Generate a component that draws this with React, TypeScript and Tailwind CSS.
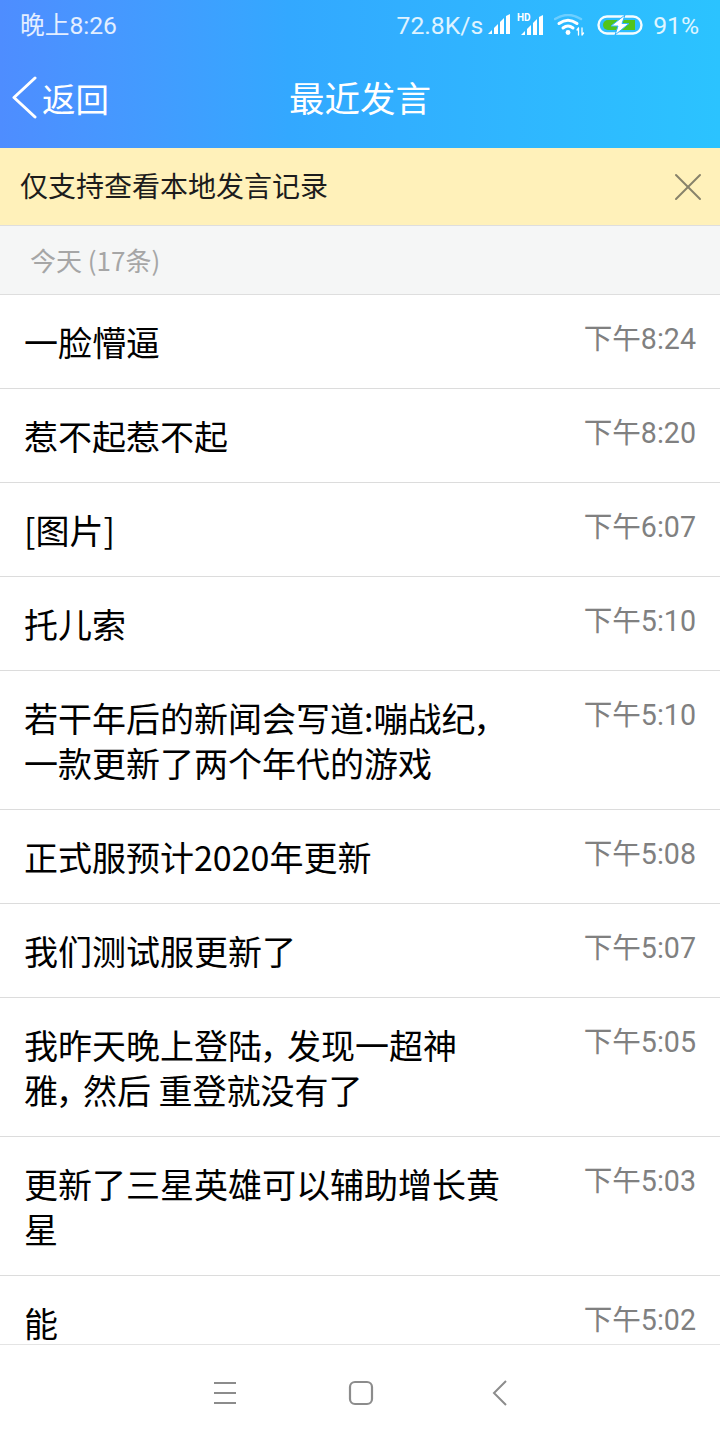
import React from 'react';
import { X } from 'lucide-react';

const Comma = () => <span className="mr-[8px]">，</span>;

const messages = [
  { lines: ['一脸懵逼'], time: '下午8:24' },
  { lines: ['惹不起惹不起'], time: '下午8:20' },
  { lines: ['[图片]'], time: '下午6:07' },
  { lines: ['托儿索'], time: '下午5:10' },
  { lines: ['若干年后的新闻会写道:嘣战纪，', '一款更新了两个年代的游戏'], time: '下午5:10' },
  { lines: ['正式服预计2020年更新'], time: '下午5:08' },
  { lines: ['我们测试服更新了'], time: '下午5:07' },
  { lines: [<>我昨天晚上登陆<Comma />发现一超神</>, <>雅<Comma />然后 重登就没有了</>], time: '下午5:05' },
  { lines: ['更新了三星英雄可以辅助增长黄', '星'], time: '下午5:03' },
  { lines: ['能'], time: '下午5:02' },
];

const SignalBars = () => (
  <g fill="white">
    <polygon points="0,20 4,16 4,20" />
    <polygon points="6,20 6,14 10,10 10,20" />
    <polygon points="12,20 12,8 16,4 16,20" />
    <polygon points="18,20 18,2 22,0 22,20" />
  </g>
);

const WifiIcon = () => (
  <svg width="31" height="22" viewBox="0 0 31 22" fill="none" stroke="white" strokeLinecap="round">
    <path d="M1 5 Q14 -3 27 5" strokeWidth="2.5" opacity="0.3" />
    <path d="M5 9.5 Q14 3 23 9.5" strokeWidth="3" />
    <path d="M9 14 Q14 10 19 14" strokeWidth="3" />
    <circle cx="14" cy="18.5" r="2.4" fill="white" stroke="none" />
    <path d="M24.5 21v-7M23 16l1.5-2M28 14v7M29.5 19l-1.5 2" strokeWidth="1.3" />
  </svg>
);

const BatteryIcon = () => (
  <svg width="46" height="20" viewBox="0 0 46 20">
    <rect x="1.5" y="1.5" width="43" height="17" rx="8.5" fill="none" stroke="white" strokeWidth="2.4" opacity="0.95" />
    <path d="M6 10a5 5 0 0 1 5-5H38V15H11A5 5 0 0 1 6 10z" fill="#52c41a" />
    <path d="M28 0 L14 11 H21 L18 20 L32 8.500 H25 Z" fill="white" stroke="#35b5ff" strokeWidth="1" />
  </svg>
);

const App = () => {
  return (
    <div className="w-[720px] h-[1440px] overflow-hidden bg-white flex flex-col font-['Noto_Sans_CJK_SC','Noto_Sans',sans-serif]">
      {/* Header */}
      <div className="h-[148px] shrink-0 bg-gradient-to-r from-[#4e8dff] via-[#33a8ff] to-[#2bc3ff] via-40% flex flex-col text-white">
        <div className="h-[50px] pl-[20px] pr-[21px] pt-[1px] flex items-center justify-between text-[24.7px] text-white/85 font-['Roboto','Noto_Sans_CJK_SC',sans-serif]">
          <span>晚上8:26</span>
          <div className="flex items-center">
            <span className="mr-[5px]">72.8K/s</span>
            <svg width="22" height="20" viewBox="0 0 22 20" className="mt-[-2px]"><SignalBars /></svg>
            <span className="w-[7px]" />
            <svg width="26" height="22" viewBox="0 0 26 22" className="mt-[-2px]">
              <text x="0" y="8" fontSize="10" fontWeight="700" fontFamily="Roboto" fill="white">HD</text>
              <g transform="translate(4,2)"><SignalBars /></g>
            </svg>
            <span className="w-[11px]" />
            <WifiIcon />
            <span className="w-[12px]" />
            <BatteryIcon />
            <span className="ml-[10px]">91%</span>
          </div>
        </div>
        <div className="relative flex-1 flex items-center justify-center pb-[4px]">
          <div className="absolute left-[12px] top-[26px] flex items-center">
            <svg width="26" height="44" viewBox="0 0 26 44" fill="none" stroke="white" strokeWidth="3" strokeLinecap="round" strokeLinejoin="round">
              <path d="M23 2 L2 21.5 L23 41" />
            </svg>
            <span className="ml-[4px] text-[33.5px] leading-[44px]">返回</span>
          </div>
          <span className="text-[35.5px] leading-[44px]">最近发言</span>
        </div>
      </div>

      {/* Notice */}
      <div className="h-[78px] shrink-0 bg-[#fff1ba] border-b border-[#dedede] pl-[20px] pr-[8px] flex items-center justify-between">
        <span className="text-[28px] text-[#1c1c1c] mt-[-3px]">仅支持查看本地发言记录</span>
        <X size={48} strokeWidth={1} className="text-[#87826a]" />
      </div>

      {/* Section title */}
      <div className="h-[69px] shrink-0 bg-[#f5f6f6] border-b border-[#dedede] pl-[30px] pb-[2px] flex items-center text-[26px] text-[#a6a6a6]">
        今天 (17条)
      </div>

      {/* Message list */}
      <div className="flex-1 overflow-hidden">
        {messages.map((m, i) => (
          <div key={i} className="border-b border-[#dcdcdc] pl-[24px] pr-[24px] py-[24px] flex justify-between items-start">
            <div className="text-[34px] leading-[45px] text-black [font-feature-settings:'palt']">
              {m.lines.map((l, j) => (
                <div key={j}>{l}</div>
              ))}
            </div>
            <span className="text-[28.6px] leading-[40px] text-[#808080] font-['Roboto','Noto_Sans_CJK_SC',sans-serif]">{m.time}</span>
          </div>
        ))}
      </div>

      {/* Navigation bar */}
      <div className="h-[96px] shrink-0 bg-white border-t border-[#e4e4e4] relative">
        <svg className="absolute left-[213px] top-[36px]" width="24" height="24" viewBox="0 0 24 24" stroke="#8c8c8c" strokeWidth="2">
          <path d="M1 2h22M1 12h22M1 22h22" />
        </svg>
        <svg className="absolute left-[348px] top-[35px]" width="26" height="26" viewBox="0 0 26 26" fill="none" stroke="#8c8c8c" strokeWidth="2.2">
          <rect x="2" y="2" width="22" height="22" rx="5" />
        </svg>
        <svg className="absolute left-[491px] top-[35px]" width="18" height="26" viewBox="0 0 18 26" fill="none" stroke="#8c8c8c" strokeWidth="2">
          <path d="M15 1 L3 13 L15 25" />
        </svg>
      </div>
    </div>
  );
};

export default App;
